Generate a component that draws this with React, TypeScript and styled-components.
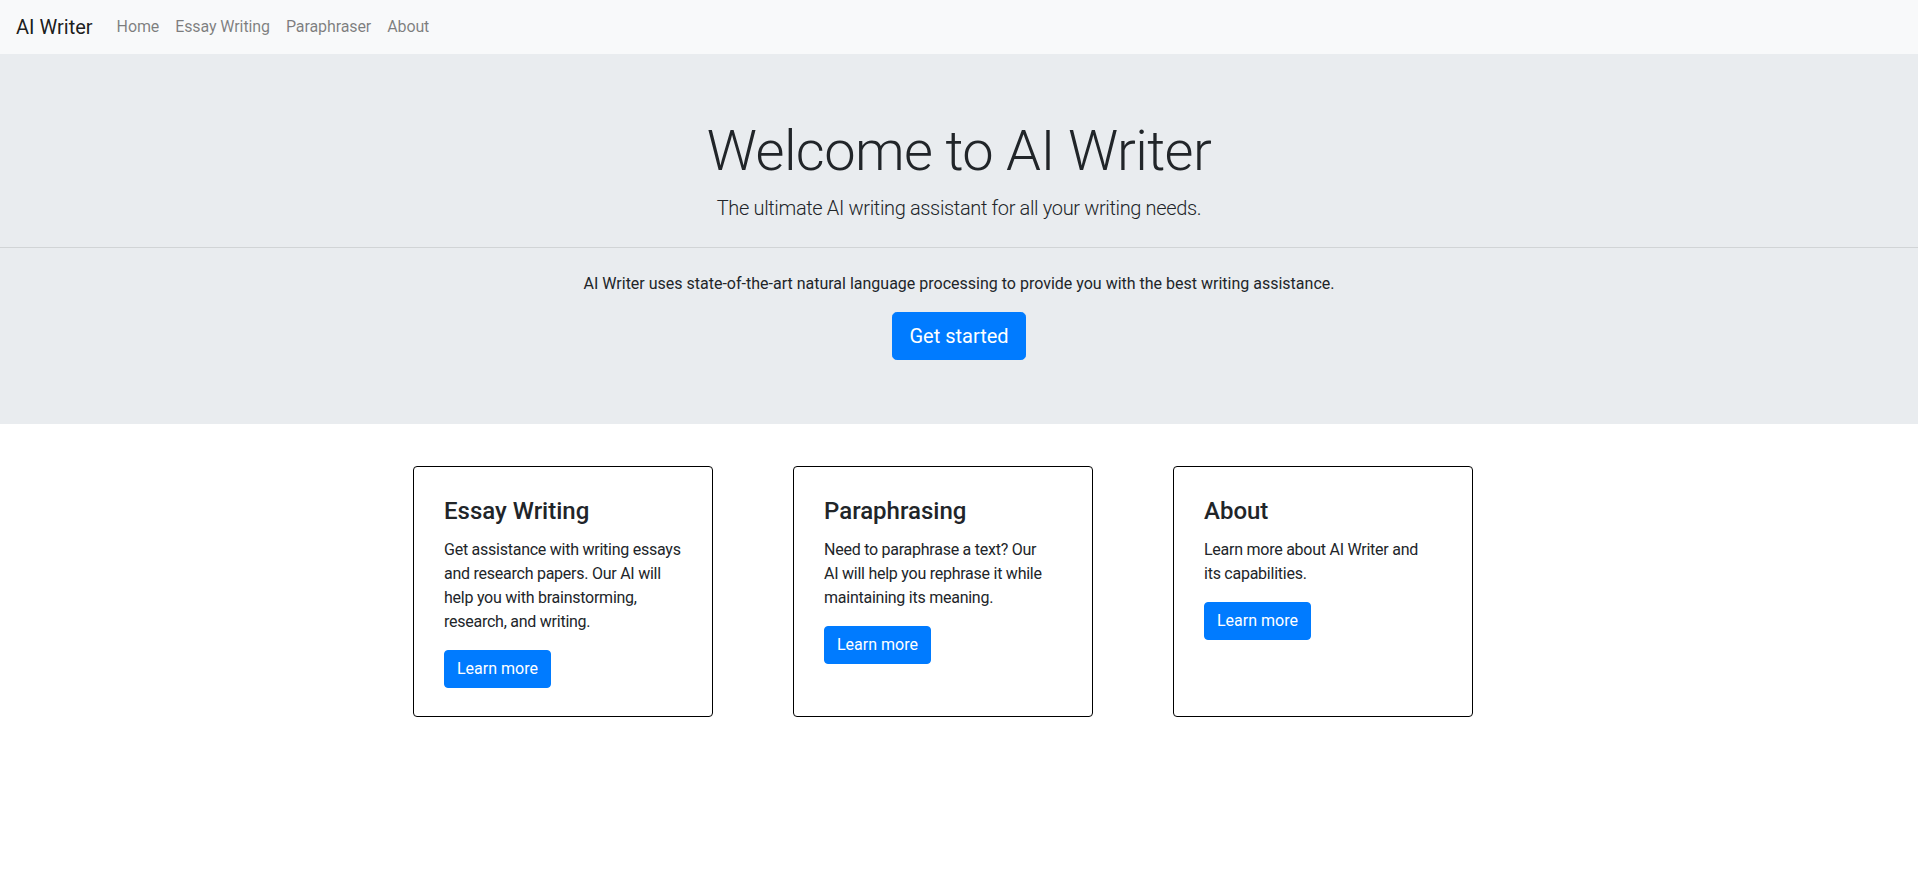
import React from "react";
import styled, { createGlobalStyle } from "styled-components";

const GlobalStyle = createGlobalStyle`
  * { box-sizing: border-box; }
  html, body { margin: 0; padding: 0; }
  body {
    font-family: Roboto, "Noto Sans", "Liberation Sans", sans-serif;
    font-size: 16px;
    line-height: 1.5;
    color: #212529;
    background: #fff;
  }
`;

const Navbar = styled.nav`
  display: flex;
  align-items: center;
  height: 54px;
  padding: 0 16px;
  background: #f8f9fa;
`;

const Brand = styled.a`
  font-size: 20px;
  line-height: 30px;
  color: rgba(0, 0, 0, 0.9);
  text-decoration: none;
  margin-right: 16px;
`;

const NavList = styled.ul`
  display: flex;
  list-style: none;
  margin: 0;
  padding: 0;
`;

const NavLink = styled.a`
  display: block;
  padding: 0 8px;
  font-size: 16px;
  letter-spacing: -0.1px;
  color: rgba(0, 0, 0, 0.5);
  text-decoration: none;
`;

const Jumbotron = styled.header`
  background: #e9ecef;
  padding: 64px 32px;
  margin-bottom: 42px;
  text-align: center;
`;

const Display = styled.h1`
  font-size: 56px;
  font-weight: 300;
  line-height: 1.2;
  letter-spacing: -0.6px;
  margin: 0 0 8px;
`;

const Lead = styled.p`
  font-size: 20px;
  font-weight: 300;
  line-height: 1.5;
  letter-spacing: -0.35px;
  margin: 0;
`;

const Divider = styled.hr`
  border: 0;
  border-top: 1px solid rgba(0, 0, 0, 0.1);
  margin: 24px -32px;
`;

const Text = styled.p`
  margin: 0 0 16px;
`;

const CardText = styled.p`
  margin: 0 0 16px;
  letter-spacing: -0.25px;
`;

const Line = styled.span`
  display: block;
  white-space: nowrap;
`;

const Button = styled.a<{ $large?: boolean }>`
  display: inline-block;
  background: #007bff;
  border: 1px solid #007bff;
  color: #fff;
  text-decoration: none;
  border-radius: ${(p) => (p.$large ? "4.8px" : "4px")};
  font-size: ${(p) => (p.$large ? "20px" : "16px")};
  line-height: 1.5;
  padding: ${(p) => (p.$large ? "8px 16px" : "6px 12px")};
  align-self: flex-start;
`;

const Container = styled.main`
  width: 1140px;
  margin: 0 auto;
  display: grid;
  grid-template-columns: repeat(3, 380px);
  align-items: stretch;
`;

const Card = styled.section`
  width: 300px;
  margin-left: 24px;
  border: 1px solid #000;
  border-radius: 4px;
  padding: 30px 30px 28px;
  display: flex;
  flex-direction: column;
`;

const CardTitle = styled.h4`
  font-size: 24px;
  font-weight: 500;
  line-height: 1.2;
  margin: 0 0 12px;
`;

const cards = [
  {
    title: "Essay Writing",
    lines: [
      "Get assistance with writing essays",
      "and research papers. Our AI will",
      "help you with brainstorming,",
      "research, and writing.",
    ],
  },
  {
    title: "Paraphrasing",
    lines: [
      "Need to paraphrase a text? Our",
      "AI will help you rephrase it while",
      "maintaining its meaning.",
    ],
  },
  {
    title: "About",
    lines: ["Learn more about AI Writer and", "its capabilities."],
  },
];

export default function App() {
  return (
    <>
      <GlobalStyle />
      <Navbar>
        <Brand href="#">AI Writer</Brand>
        <NavList>
          {["Home", "Essay Writing", "Paraphraser", "About"].map((l) => (
            <li key={l}>
              <NavLink href="#">{l}</NavLink>
            </li>
          ))}
        </NavList>
      </Navbar>
      <Jumbotron>
        <Display>Welcome to AI Writer</Display>
        <Lead>The ultimate AI writing assistant for all your writing needs.</Lead>
        <Divider />
        <Text>
          AI Writer uses state-of-the-art natural language processing to provide you with the best writing assistance.
        </Text>
        <Button $large href="#">Get started</Button>
      </Jumbotron>
      <Container>
        {cards.map((c) => (
          <Card key={c.title}>
            <CardTitle>{c.title}</CardTitle>
            <CardText>
              {c.lines.map((l) => (
                <Line key={l}>{l}</Line>
              ))}
            </CardText>
            <Button href="#">Learn more</Button>
          </Card>
        ))}
      </Container>
    </>
  );
}
